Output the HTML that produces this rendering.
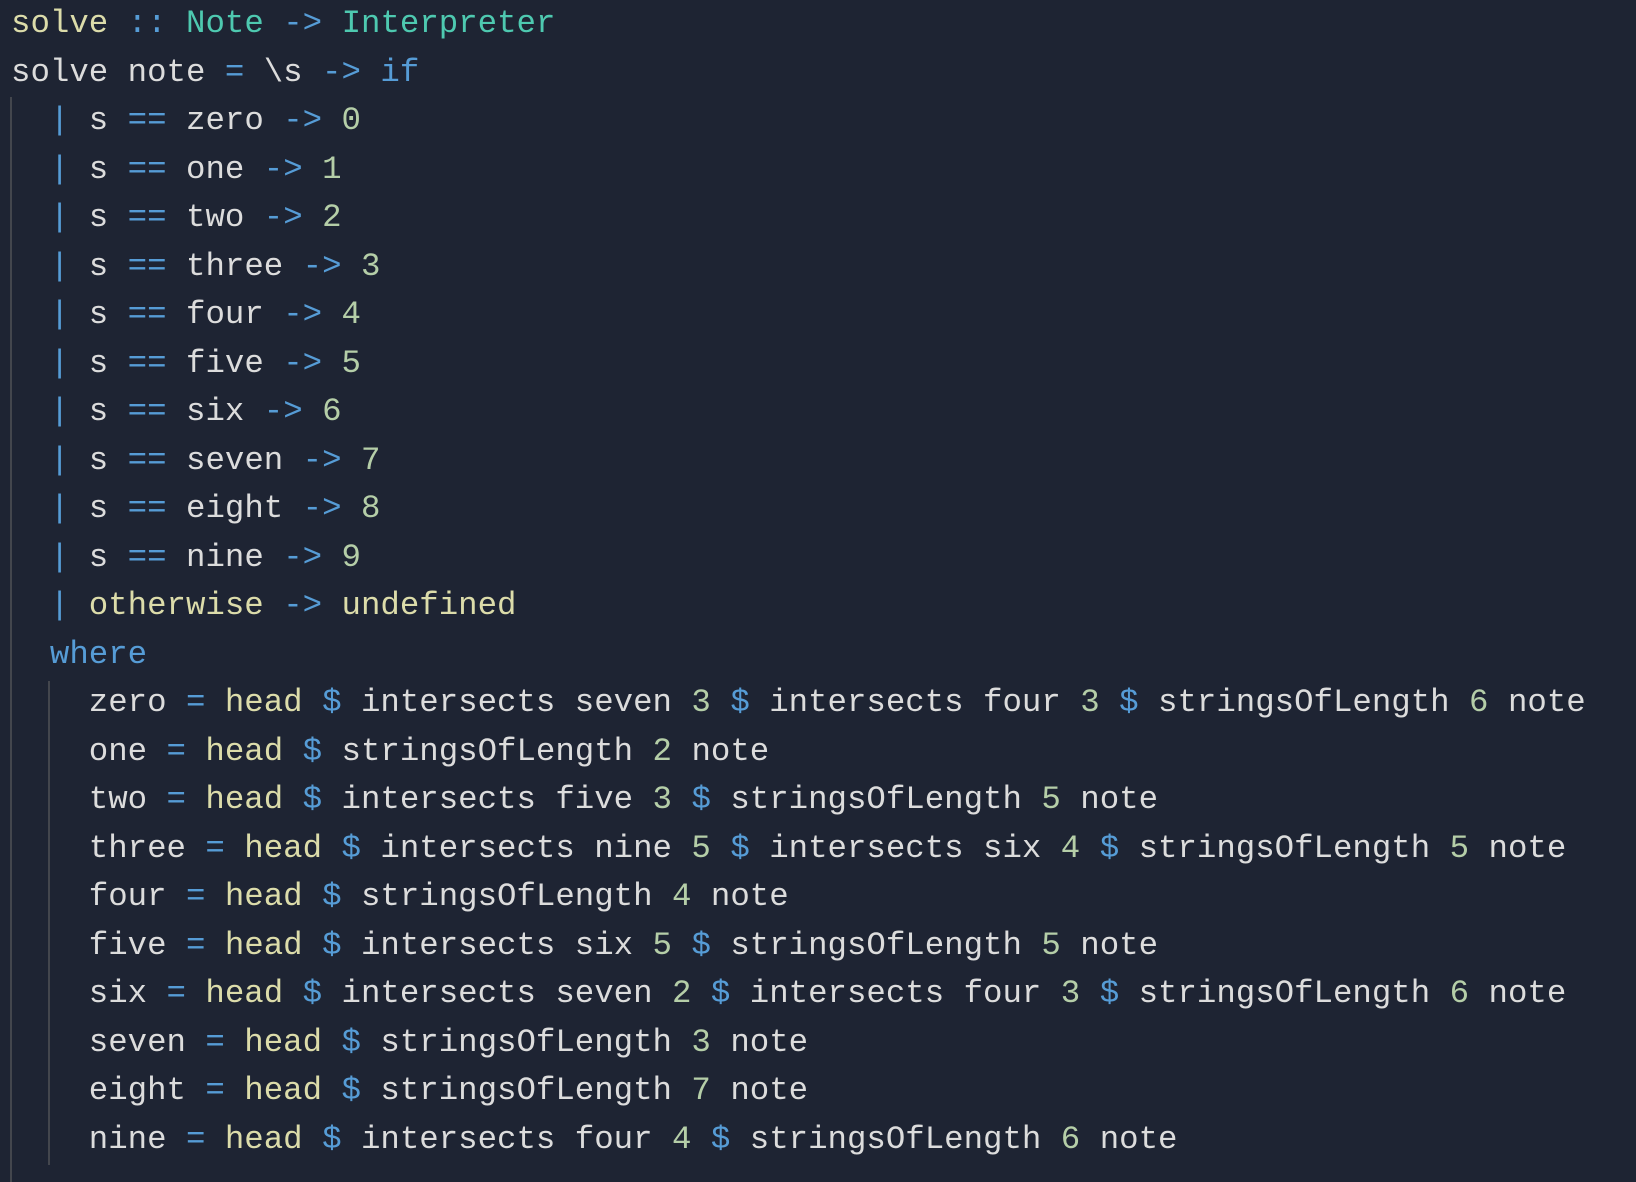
<!DOCTYPE html>
<html><head><meta charset="utf-8"><style>
html,body{margin:0;padding:0;background:#1e2433;width:1636px;height:1182px;overflow:hidden}
pre{margin:0;position:absolute;left:11px;top:0px;font-family:"Liberation Mono","DejaVu Sans Mono",monospace;font-size:32.4px;line-height:48.5px;color:#dcdcdc}
.y{color:#dcdcaa}.t{color:#4ec9b0}.b{color:#569cd6}.n{color:#b5cea8}
.g{position:absolute;width:2px;background:#43464d}
</style></head><body>
<div class="g" style="left:10px;top:97px;height:1085px"></div>
<div class="g" style="left:48px;top:681px;height:484px"></div>
<pre><span class="y">solve</span> <span class="b">::</span> <span class="t">Note</span> <span class="b">-&gt;</span> <span class="t">Interpreter</span>
solve note <span class="b">=</span> \s <span class="b">-&gt;</span> <span class="b">if</span>
  <span class="b">|</span> s <span class="b">==</span> zero <span class="b">-&gt;</span> <span class="n">0</span>
  <span class="b">|</span> s <span class="b">==</span> one <span class="b">-&gt;</span> <span class="n">1</span>
  <span class="b">|</span> s <span class="b">==</span> two <span class="b">-&gt;</span> <span class="n">2</span>
  <span class="b">|</span> s <span class="b">==</span> three <span class="b">-&gt;</span> <span class="n">3</span>
  <span class="b">|</span> s <span class="b">==</span> four <span class="b">-&gt;</span> <span class="n">4</span>
  <span class="b">|</span> s <span class="b">==</span> five <span class="b">-&gt;</span> <span class="n">5</span>
  <span class="b">|</span> s <span class="b">==</span> six <span class="b">-&gt;</span> <span class="n">6</span>
  <span class="b">|</span> s <span class="b">==</span> seven <span class="b">-&gt;</span> <span class="n">7</span>
  <span class="b">|</span> s <span class="b">==</span> eight <span class="b">-&gt;</span> <span class="n">8</span>
  <span class="b">|</span> s <span class="b">==</span> nine <span class="b">-&gt;</span> <span class="n">9</span>
  <span class="b">|</span> <span class="y">otherwise</span> <span class="b">-&gt;</span> <span class="y">undefined</span>
  <span class="b">where</span>
    zero <span class="b">=</span> <span class="y">head</span> <span class="b">$</span> intersects seven <span class="n">3</span> <span class="b">$</span> intersects four <span class="n">3</span> <span class="b">$</span> stringsOfLength <span class="n">6</span> note
    one <span class="b">=</span> <span class="y">head</span> <span class="b">$</span> stringsOfLength <span class="n">2</span> note
    two <span class="b">=</span> <span class="y">head</span> <span class="b">$</span> intersects five <span class="n">3</span> <span class="b">$</span> stringsOfLength <span class="n">5</span> note
    three <span class="b">=</span> <span class="y">head</span> <span class="b">$</span> intersects nine <span class="n">5</span> <span class="b">$</span> intersects six <span class="n">4</span> <span class="b">$</span> stringsOfLength <span class="n">5</span> note
    four <span class="b">=</span> <span class="y">head</span> <span class="b">$</span> stringsOfLength <span class="n">4</span> note
    five <span class="b">=</span> <span class="y">head</span> <span class="b">$</span> intersects six <span class="n">5</span> <span class="b">$</span> stringsOfLength <span class="n">5</span> note
    six <span class="b">=</span> <span class="y">head</span> <span class="b">$</span> intersects seven <span class="n">2</span> <span class="b">$</span> intersects four <span class="n">3</span> <span class="b">$</span> stringsOfLength <span class="n">6</span> note
    seven <span class="b">=</span> <span class="y">head</span> <span class="b">$</span> stringsOfLength <span class="n">3</span> note
    eight <span class="b">=</span> <span class="y">head</span> <span class="b">$</span> stringsOfLength <span class="n">7</span> note
    nine <span class="b">=</span> <span class="y">head</span> <span class="b">$</span> intersects four <span class="n">4</span> <span class="b">$</span> stringsOfLength <span class="n">6</span> note</pre>
</body></html>
